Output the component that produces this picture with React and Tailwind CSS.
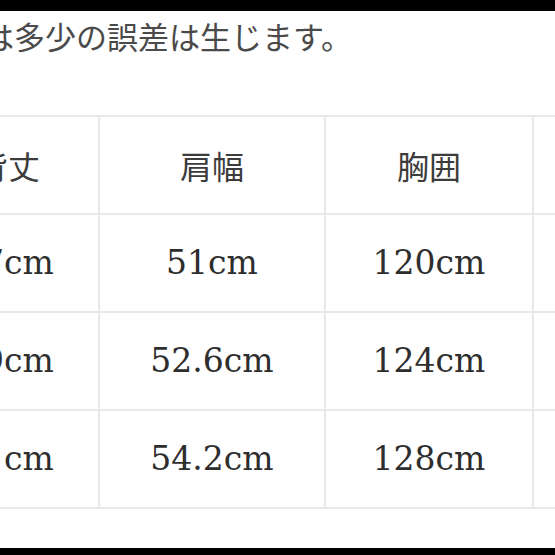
import React from "react";

const headers = ["背丈", "肩幅", "胸囲", "袖丈"];
const rows = [
	["67cm", "51cm", "120cm", "58cm"],
	["69cm", "52.6cm", "124cm", "59cm"],
	["71cm", "54.2cm", "128cm", "60cm"],
];

const cjk = { fontFamily: '"Noto Sans CJK JP", "Noto Sans", sans-serif' };
const serif = { fontFamily: '"DejaVu Serif", "Liberation Serif", serif' };

function Cell({ children, head }) {
	return (
		<div
			className={
				"h-[98px] flex items-center justify-center border-r-2 border-b-2 border-[#e8e8e8] whitespace-nowrap " +
				(head ? "text-[32px] text-[#3c3c3c]" : "text-[33px] text-[#2e2e2e]")
			}
			style={head ? cjk : serif}
		>
			{children}
		</div>
	);
}

export default function App() {
	return (
		<div className="w-[555px] h-[555px] bg-white overflow-hidden flex flex-col">
			<div className="h-[11px] bg-black shrink-0" />
			<div className="pt-[9px] h-[104px] shrink-0">
				<div
					className="ml-[-48px] text-[31px] leading-none text-[#4a4a4a] whitespace-nowrap"
					style={cjk}
				>
					には多少の誤差は生じます。
				</div>
			</div>
			<div className="ml-[-82px] grid grid-cols-[182px_226px_208px_200px] border-t-2 border-[#e8e8e8] w-max">
				{headers.map((h) => (
					<Cell key={h} head>
						{h}
					</Cell>
				))}
				{rows.map((r, i) =>
					r.map((v, j) => <Cell key={i + "-" + j}>{v}</Cell>)
				)}
			</div>
			<div className="flex-1" />
			<div className="h-[7px] bg-black shrink-0" />
		</div>
	);
}
